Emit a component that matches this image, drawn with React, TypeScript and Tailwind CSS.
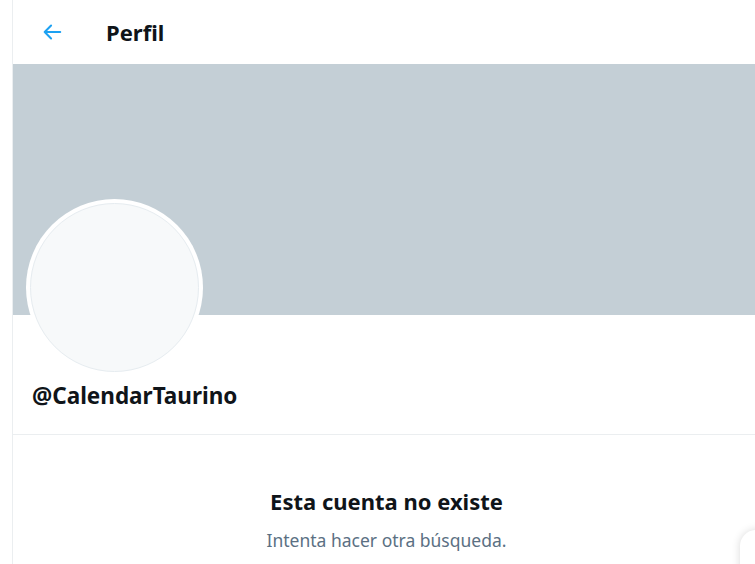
import React from "react";

export default function App() {
  return (
    <div className="relative h-[564px] w-[755px] overflow-hidden bg-white" style={{ fontFamily: '"Noto Sans", "Open Sans", sans-serif' }}>
      <div className="ml-[12px] h-full w-[748px] border-l border-[#ebeef0]">
        <header className="flex h-[64px] items-center">
          <div className="ml-[28px] flex h-[22px] w-[22px] items-center justify-center">
            <svg viewBox="0 0 24 24" className="h-[24px] w-[24px]" fill="none" stroke="#1da1f2" strokeWidth="2.2" strokeLinecap="round" strokeLinejoin="round">
              <path d="M21 12H4M11 5l-7 7 7 7" />
            </svg>
          </div>
          <h1 className="ml-[43px] text-[22px] font-bold text-[#0f1419]">Perfil</h1>
        </header>
        <div className="h-[251px] bg-[#c4cfd6]" />
        <div className="relative h-[68px]">
          <div className="absolute left-[13px] top-[-116px] h-[177px] w-[177px] rounded-full bg-white p-[4px]">
            <div className="h-full w-full rounded-full border border-[#e6ecf0] bg-[#f7f9fa]" />
          </div>
        </div>
        <div className="border-b border-[#ebeef0] pb-[25px] pl-[19px]">
          <div className="text-[22.5px] font-bold leading-[26px] text-[#0f1419]">@CalendarTaurino</div>
        </div>
        <div className="flex flex-col items-center pt-[51px]">
          <div className="text-[22px] font-bold leading-[30px] text-[#0f1419]">Esta cuenta no existe</div>
          <div className="mt-[13px] text-[17.5px] leading-[22px] text-[#5b7083]">Intenta hacer otra búsqueda.</div>
        </div>
      </div>
      <div className="absolute left-[740px] top-[530px] h-[60px] w-[60px] rounded-[16px] bg-white shadow-[0_0_8px_rgba(0,0,0,0.15)]" />
    </div>
  );
}
